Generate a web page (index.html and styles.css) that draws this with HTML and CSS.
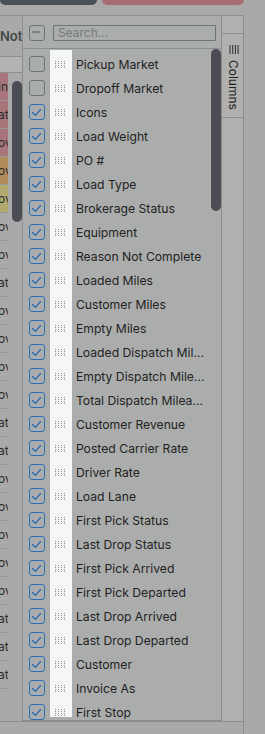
FILE: index.html
```html
<!DOCTYPE html>
<html>
<head>
<meta charset="utf-8">
<link rel="stylesheet" href="styles.css">
</head>
<body>
<div class="topbar">
  <div class="tb-dark"></div>
  <div class="tb-pink"></div>
</div>
<div class="grid">
  <div class="grid-main">
    <div class="left">
      <div class="hdr"><span>Not</span></div>
      <div class="filter"></div>
      <div class="lbody">
        <div class="rows">
          <div class="row pink"><span class="t">in</span></div>
          <div class="row pink"><span class="t">at</span></div>
          <div class="row pink"><span class="t">ov</span></div>
          <div class="row orange"><span class="t">ov</span></div>
          <div class="row yellow"><span class="t">ov</span></div>
          <div class="row"><span class="t">ov</span></div>
          <div class="row"><span class="t">ov</span></div>
          <div class="row"><span class="t">at</span></div>
          <div class="row"><span class="t">ov</span></div>
          <div class="row"><span class="t">ov</span></div>
          <div class="row"><span class="t">ov</span></div>
          <div class="row"><span class="t">ov</span></div>
          <div class="row"><span class="t">at</span></div>
          <div class="row"><span class="t">at</span></div>
          <div class="row"><span class="t">ov</span></div>
          <div class="row"><span class="t">ov</span></div>
          <div class="row"><span class="t">ov</span></div>
          <div class="row"><span class="t">ov</span></div>
          <div class="row"><span class="t">ov</span></div>
          <div class="row"><span class="t">at</span></div>
          <div class="row"><span class="t">at</span></div>
          <div class="row"><span class="t">at</span></div>
        </div>
        <div class="vtrack"><div class="vthumb"></div></div>
      </div>
    </div>
    <div class="panel">
      <div class="panel-head">
        <span class="cb cb-minus"><svg width="16" height="16" viewBox="0 0 16 16"><line x1="4" y1="8" x2="12" y2="8" stroke="#6b7472" stroke-width="1.5"/></svg></span>
        <div class="search">Search...</div>
      </div>
      <div class="list">
        <div class="pthumb"></div>
        <div class="item"><span class="cb"></span><span class="grip"></span><span class="lbl">Pickup Market</span></div>
        <div class="item"><span class="cb"></span><span class="grip"></span><span class="lbl">Dropoff Market</span></div>
        <div class="item"><span class="cb on"></span><span class="grip"></span><span class="lbl">Icons</span></div>
        <div class="item"><span class="cb on"></span><span class="grip"></span><span class="lbl">Load Weight</span></div>
        <div class="item"><span class="cb on"></span><span class="grip"></span><span class="lbl">PO #</span></div>
        <div class="item"><span class="cb on"></span><span class="grip"></span><span class="lbl">Load Type</span></div>
        <div class="item"><span class="cb on"></span><span class="grip"></span><span class="lbl">Brokerage Status</span></div>
        <div class="item"><span class="cb on"></span><span class="grip"></span><span class="lbl">Equipment</span></div>
        <div class="item"><span class="cb on"></span><span class="grip"></span><span class="lbl">Reason Not Complete</span></div>
        <div class="item"><span class="cb on"></span><span class="grip"></span><span class="lbl">Loaded Miles</span></div>
        <div class="item"><span class="cb on"></span><span class="grip"></span><span class="lbl">Customer Miles</span></div>
        <div class="item"><span class="cb on"></span><span class="grip"></span><span class="lbl">Empty Miles</span></div>
        <div class="item"><span class="cb on"></span><span class="grip"></span><span class="lbl">Loaded Dispatch Mil...</span></div>
        <div class="item"><span class="cb on"></span><span class="grip"></span><span class="lbl">Empty Dispatch Mile...</span></div>
        <div class="item"><span class="cb on"></span><span class="grip"></span><span class="lbl">Total Dispatch Milea...</span></div>
        <div class="item"><span class="cb on"></span><span class="grip"></span><span class="lbl">Customer Revenue</span></div>
        <div class="item"><span class="cb on"></span><span class="grip"></span><span class="lbl">Posted Carrier Rate</span></div>
        <div class="item"><span class="cb on"></span><span class="grip"></span><span class="lbl">Driver Rate</span></div>
        <div class="item"><span class="cb on"></span><span class="grip"></span><span class="lbl">Load Lane</span></div>
        <div class="item"><span class="cb on"></span><span class="grip"></span><span class="lbl">First Pick Status</span></div>
        <div class="item"><span class="cb on"></span><span class="grip"></span><span class="lbl">Last Drop Status</span></div>
        <div class="item"><span class="cb on"></span><span class="grip"></span><span class="lbl">First Pick Arrived</span></div>
        <div class="item"><span class="cb on"></span><span class="grip"></span><span class="lbl">First Pick Departed</span></div>
        <div class="item"><span class="cb on"></span><span class="grip"></span><span class="lbl">Last Drop Arrived</span></div>
        <div class="item"><span class="cb on"></span><span class="grip"></span><span class="lbl">Last Drop Departed</span></div>
        <div class="item"><span class="cb on"></span><span class="grip"></span><span class="lbl">Customer</span></div>
        <div class="item"><span class="cb on"></span><span class="grip"></span><span class="lbl">Invoice As</span></div>
        <div class="item"><span class="cb on"></span><span class="grip"></span><span class="lbl">First Stop</span></div>
      </div>
    </div>
    <div class="sidebar">
      <div class="tab">
        <svg class="tab-icon" width="10" height="9" viewBox="0 0 10 9"><g fill="#2a2d2d"><rect x="0.5" y="0" width="1" height="9"/><rect x="3.2" y="0" width="1" height="9"/><rect x="5.9" y="0" width="1" height="9"/><rect x="8.6" y="0" width="1" height="9"/></g></svg>
        <span class="tab-text">Columns</span>
      </div>
    </div>
  </div>
  <div class="grid-foot"></div>
</div>
</body>
</html>
```

FILE: styles.css
```css
html, body {
  margin: 0;
  padding: 0;
}
body {
  width: 265px;
  height: 734px;
  overflow: hidden;
  background: #a8a9a8;
  font-family: Inter, "Noto Sans", sans-serif;
  color: #1f2222;
}
.topbar {
  display: flex;
  height: 5px;
}
.tb-dark {
  width: 97px;
  background: #4a5053;
  border-radius: 0 0 5px 5px;
}
.tb-pink {
  margin-left: 5px;
  width: 142px;
  background: #a86d73;
  border-radius: 0 0 5px 5px;
}
.grid {
  margin-top: 10px;
  width: 244px;
  height: 719px;
  box-sizing: border-box;
  border-top: 1px solid #8a8e8d;
  border-right: 1px solid #8a8e8d;
  display: flex;
  flex-direction: column;
}
.grid-main {
  display: flex;
  height: 706px;
  border-bottom: 1px solid #8a8e8d;
  box-sizing: border-box;
}
.grid-foot {
  flex: 1;
}
.left {
  width: 22px;
  display: flex;
  flex-direction: column;
  overflow: hidden;
}
.hdr {
  height: 40px;
  border-bottom: 1px solid #8a8e8d;
  display: flex;
  align-items: center;
  font-size: 13px;
  font-weight: 600;
  color: #444847;
  white-space: nowrap;
}
.filter {
  height: 15px;
  background: #b2b3b2;
  border-bottom: 1px solid #8a8e8d;
}
.lbody {
  flex: 1;
  display: flex;
}
.rows {
  width: 8px;
  overflow: hidden;
}
.row {
  height: 27px;
  border-bottom: 1px solid #969998;
  display: flex;
  align-items: center;
  font-size: 12px;
  color: #2a2c2c;
  white-space: nowrap;
}
.row.pink { background: #a8767a; }
.row.orange { background: #b38c5c; }
.row.yellow { background: #b1aa6c; }
.t { margin-left: -2px; }
.vtrack {
  padding-left: 4px;
  padding-top: 8px;
}
.vthumb {
  width: 10px;
  height: 141px;
  background: #4b4c54;
  border-radius: 5px;
}
.panel {
  width: 201px;
  box-sizing: border-box;
  border-left: 1px solid #8a8e8d;
  border-right: 1px solid #8a8e8d;
  border-bottom: 1px solid #8a8e8d;
  background: #abadac;
  display: flex;
  flex-direction: column;
}
.panel-head {
  height: 33px;
  box-sizing: border-box;
  border-bottom: 1px solid #8a8e8d;
  display: flex;
  align-items: center;
  padding-left: 6px;
  padding-top: 1px;
}
.cb {
  width: 16px;
  height: 16px;
  box-sizing: border-box;
  border: 1.5px solid #6b7472;
  border-radius: 3px;
  flex: none;
  position: relative;
}
.cb-minus svg {
  position: absolute;
  left: -1.5px;
  top: -1.5px;
}
.cb.on {
  border-color: #2d6db5;
  background: #abadac url("data:image/svg+xml;utf8,<svg xmlns='http://www.w3.org/2000/svg' width='13' height='13' viewBox='0 0 13 13'><polyline points='2.5,6.5 5.3,9.3 10.5,3.8' fill='none' stroke='%232d6db5' stroke-width='1.4' stroke-linecap='round' stroke-linejoin='round'/></svg>") center/13px 13px no-repeat;
}
.search {
  margin-left: 8px;
  width: 163px;
  height: 16px;
  box-sizing: border-box;
  border: 1px solid #6c7774;
  border-radius: 1px;
  font-size: 12px;
  line-height: 14px;
  color: #747c7a;
  padding-left: 4px;
}
.list {
  position: relative;
  flex: 1;
  overflow: hidden;
  padding-top: 3px;
  background: linear-gradient(#f5f6f6, #f5f6f6) 27px 1px / 22px calc(100% - 4px) no-repeat;
}
.pthumb {
  position: absolute;
  right: 0;
  top: 0;
  width: 10px;
  height: 162px;
  background: #4b4c54;
  border-radius: 5px;
}
.item {
  height: 24px;
  display: flex;
  align-items: center;
  padding-left: 6px;
}
.grip {
  width: 10px;
  height: 7px;
  margin-left: 10px;
  flex: none;
  background: url("data:image/svg+xml;utf8,<svg xmlns='http://www.w3.org/2000/svg' width='10' height='7' viewBox='0 0 10 7'><g fill='%23888c8b'><rect x='0' y='0' width='1' height='1'/><rect x='3' y='0' width='1' height='1'/><rect x='6' y='0' width='1' height='1'/><rect x='9' y='0' width='1' height='1'/><rect x='0' y='2' width='1' height='1'/><rect x='3' y='2' width='1' height='1'/><rect x='6' y='2' width='1' height='1'/><rect x='9' y='2' width='1' height='1'/><rect x='0' y='4' width='1' height='1'/><rect x='3' y='4' width='1' height='1'/><rect x='6' y='4' width='1' height='1'/><rect x='9' y='4' width='1' height='1'/><rect x='0' y='6' width='1' height='1'/><rect x='3' y='6' width='1' height='1'/><rect x='6' y='6' width='1' height='1'/><rect x='9' y='6' width='1' height='1'/></g></svg>") no-repeat;
}
.lbl {
  margin-left: 11px;
  font-size: 12.2px;
  color: #1f2222;
  white-space: nowrap;
}
.sidebar {
  width: 21px;
  background: #b0b0af;
  padding-top: 17px;
}
.tab {
  height: 85px;
  border-top: 1px solid #8a8e8d;
  border-bottom: 1px solid #8a8e8d;
  display: flex;
  flex-direction: column;
  align-items: center;
  padding-top: 11px;
  box-sizing: border-box;
}
.tab-icon {
  margin-left: 2px;
}
.tab-text {
  margin-top: 6px;
  writing-mode: vertical-rl;
  font-size: 12px;
  color: #1f2222;
  margin-left: 1px;
}
```
